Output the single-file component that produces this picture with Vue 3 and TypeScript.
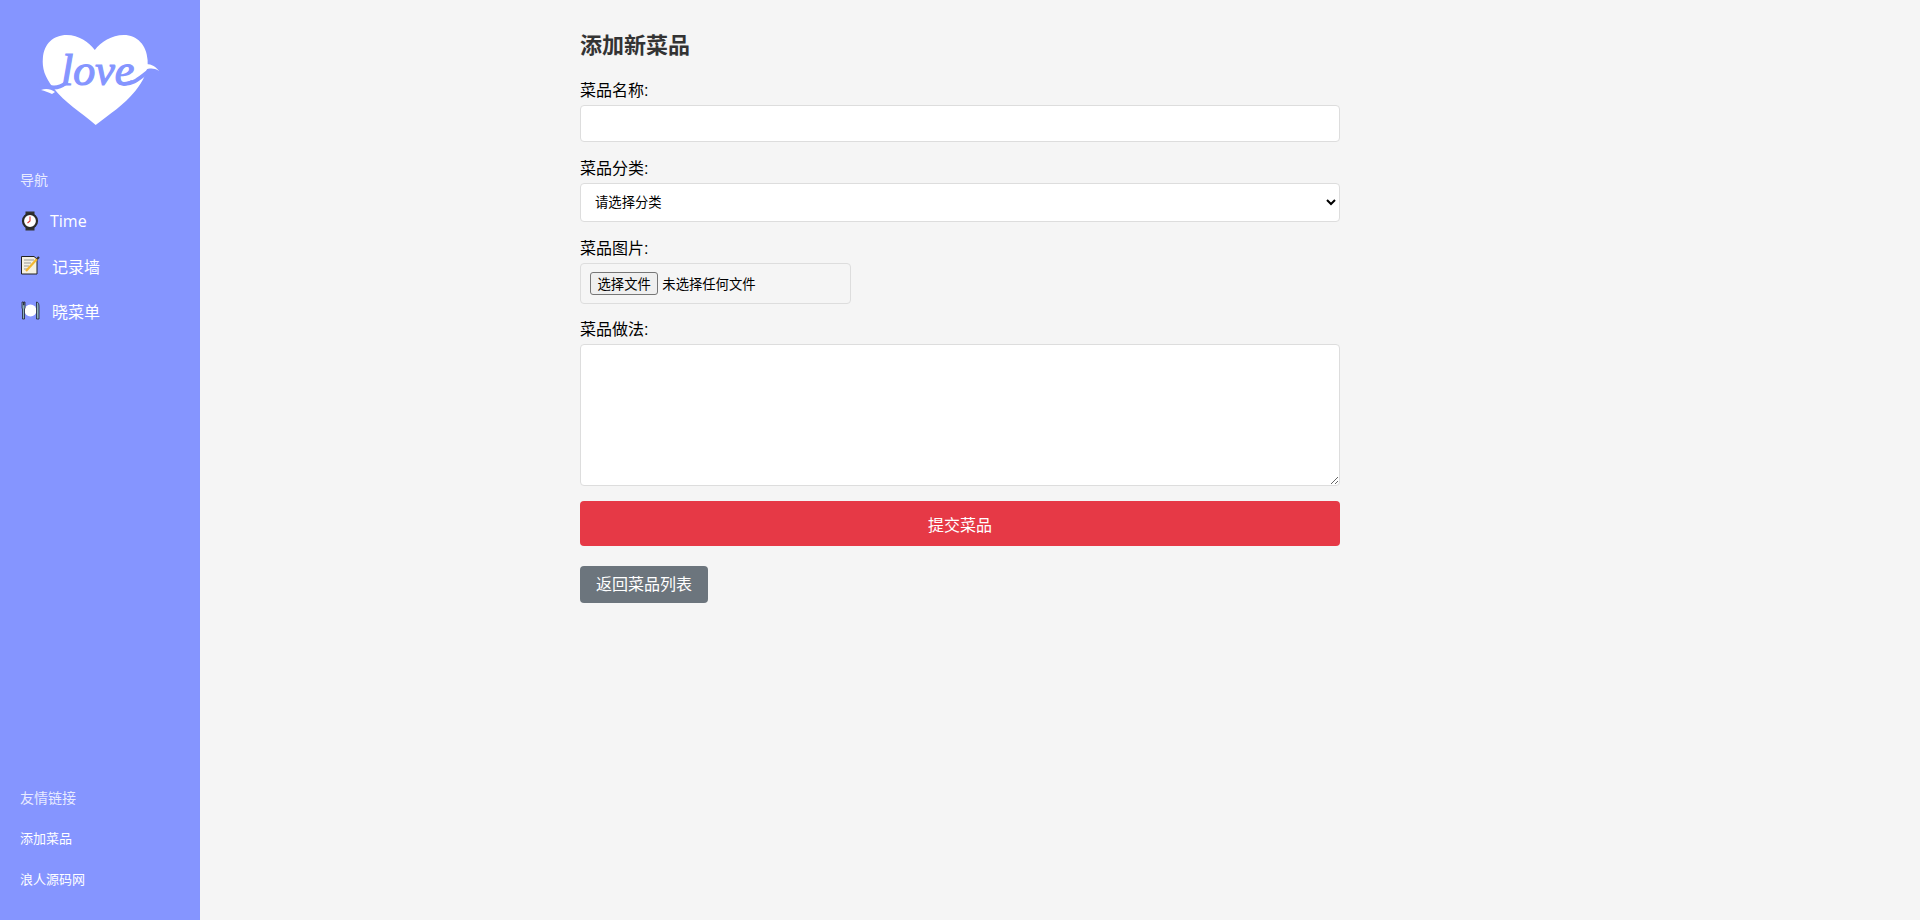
<script setup lang="ts">
import { ref } from 'vue'

const name = ref('')
const category = ref('')
const recipe = ref('')
const fileName = ref('未选择任何文件')
const fileInput = ref<HTMLInputElement | null>(null)

function pickFile(): void {
  fileInput.value?.click()
}

function onFile(e: Event): void {
  const files = (e.target as HTMLInputElement).files
  fileName.value = files && files[0] ? files[0].name : '未选择任何文件'
}
</script>

<template>
  <div class="page">
    <aside class="sidebar">
      <div class="top">
        <div class="logo">
          <svg width="122" height="92" viewBox="0 0 122 92">
            <path class="heart" transform="translate(2 0) scale(0.88 1)" d="M61 91 C44 78 26 69 13 54 C3 43 0 34 1 24 C2 10 13 1 28 1 C42 1 53 8 60 16 C67 8 79 1 93 1 C108 1 119 11 120 26 C121 37 115 47 106 57 C93 71 77 80 61 91 Z" />
            <path class="cut" d="M84 50 C95 50 100 43 112 35" />
            <path class="cut" d="M26 49 C18 55 10 55 2 49" />
            <path class="heart" d="M106 30 C112 30 116 33 119 37 C114 34 110 34 105 36 Z" />
            <path class="heart" d="M1 56 C6 54 11 55 15 58 L12 60 C8 58 5 57 1 56 Z" />
            <text class="love" x="21" y="51">love</text>
          </svg>
        </div>
        <div class="heading nav-heading">导航</div>
        <nav class="nav">
          <a class="nav-item" href="#">
            <svg class="icon" width="18" height="20" viewBox="0 0 18 20">
              <rect x="4.5" y="0.5" width="9" height="5" fill="#333" />
              <rect x="4.5" y="14.5" width="9" height="5" fill="#333" />
              <circle cx="9" cy="10" r="7" fill="#fff" stroke="#2b2b2b" stroke-width="2.2" />
              <path d="M9 5.5 V10 L6.5 12" fill="none" stroke="#d33" stroke-width="1.1" />
            </svg>
            <span class="time-label">Time</span>
          </a>
          <a class="nav-item" href="#">
            <svg class="icon memo" width="19" height="19" viewBox="0 0 19 19">
              <path d="M0.5 0.5 H13 L16 3 V18 H0.5 Z" fill="#f4f1e4" stroke="#222" />
              <path d="M3 4 H13 M3 7 H10 M3 10 H8 M3 13 H6" stroke="#999" fill="none" />
              <path d="M5 15 L16 3" stroke="#f2b632" stroke-width="2.2" />
              <path d="M16 3 L18 1" stroke="#333" stroke-width="2.2" />
            </svg>
            <span class="cjk-label">记录墙</span>
          </a>
          <a class="nav-item" href="#">
            <svg class="icon" width="19" height="19" viewBox="0 0 19 19">
              <circle cx="9.5" cy="9.5" r="6" fill="#fff" />
              <path d="M1 1 H2.5 V4 H3 V1 H4 V7 L3.5 8 V18 H1.5 V8 L1 7 Z" fill="#8ab0bd" stroke="#223" stroke-width="0.8" />
              <path d="M15.5 1 C17.5 1 18 3 18 6 V18 H15.5 Z" fill="#8ab0bd" stroke="#223" stroke-width="0.8" />
            </svg>
            <span class="cjk-label">晓菜单</span>
          </a>
        </nav>
      </div>
      <div class="bottom">
        <div class="heading">友情链接</div>
        <a class="link first-link" href="#">添加菜品</a>
        <a class="link" href="#">浪人源码网</a>
      </div>
    </aside>

    <main class="main">
      <div class="container">
        <h2 class="title">添加新菜品</h2>
        <form class="form" @submit.prevent>
          <div class="group">
            <label class="label" for="dish-name">菜品名称:</label>
            <input id="dish-name" v-model="name" class="control text" type="text" />
          </div>
          <div class="group">
            <label class="label" for="dish-cat">菜品分类:</label>
            <select id="dish-cat" v-model="category" class="control select">
              <option value="">请选择分类</option>
            </select>
          </div>
          <div class="group file-group">
            <span class="label">菜品图片:</span>
            <div class="file-box">
              <button class="file-btn" type="button" @click="pickFile">选择文件</button>
              <span class="file-name">{{ fileName }}</span>
              <input ref="fileInput" class="file-hidden" type="file" @change="onFile" />
            </div>
          </div>
          <div class="group">
            <label class="label" for="dish-recipe">菜品做法:</label>
            <textarea id="dish-recipe" v-model="recipe" class="control area"></textarea>
          </div>
          <button class="submit" type="submit">提交菜品</button>
        </form>
        <a class="back" href="#">返回菜品列表</a>
      </div>
    </main>
  </div>
</template>

<style scoped>
.page {
  display: grid;
  grid-template-columns: 200px 1fr 200px;
  height: 920px;
  background: #f5f5f5;
  color: #000;
  font-family: "Liberation Sans", "Noto Sans CJK SC", sans-serif;
}
.sidebar {
  display: flex;
  flex-direction: column;
  justify-content: space-between;
  background: #8595ff;
  color: #fff;
}
.logo {
  display: flex;
  padding: 34px 0 0 40px;
  height: 91px;
}
.logo svg {
  overflow: visible;
}
.heart {
  fill: #fff;
}
.cut {
  fill: none;
  stroke: #8595ff;
  stroke-width: 4px;
  stroke-linecap: round;
}
.love {
  fill: #8595ff;
  stroke: #8595ff;
  stroke-width: 1.2px;
  font-family: "Liberation Serif", serif;
  font-style: italic;
  font-size: 44px;
}
.heading {
  font-size: 14px;
  line-height: 20px;
  color: rgba(255, 255, 255, 0.82);
  padding-left: 20px;
}
.nav-heading {
  margin-top: 45px;
}
.nav {
  display: flex;
  flex-direction: column;
  margin-top: 8px;
}
.nav-item {
  display: flex;
  align-items: center;
  height: 45px;
  padding-left: 21px;
  color: #fff;
  font-size: 16px;
  text-decoration: none;
}
.icon {
  flex: none;
}
.time-label {
  margin-left: 11px;
  font-family: "Open Sans", sans-serif;
}
.cjk-label {
  margin-left: 12px;
  font-family: "Noto Sans CJK SC", sans-serif;
}
.bottom {
  display: flex;
  flex-direction: column;
  padding-bottom: 30px;
}
.link {
  margin-top: 21px;
  padding-left: 20px;
  font-size: 13px;
  line-height: 20px;
  color: #fff;
  text-decoration: none;
}
.first-link {
  margin-top: 21px;
}
.main {
  min-width: 0;
}
.container {
  max-width: 760px;
  margin: 0 auto;
  padding-top: 33px;
}
.title {
  margin: 0 0 20px;
  font-size: 22px;
  line-height: 26px;
  font-weight: 700;
  color: #333;
}
.group {
  margin-bottom: 15px;
}
.file-group {
  margin-bottom: 14px;
}
.label {
  display: block;
  margin-bottom: 3px;
  font-size: 16px;
  line-height: 23px;
}
.control {
  display: block;
  width: 100%;
  box-sizing: border-box;
  border: 1px solid #ddd;
  border-radius: 4px;
  background: #fff;
  font-family: inherit;
  font-size: 13.33px;
}
.control:focus {
  outline: none;
}
.text {
  height: 37px;
  padding: 10px;
}
.select {
  height: 39px;
  padding: 10px;
}
.area {
  height: 142px;
  padding: 10px;
  resize: vertical;
}
.file-box {
  display: flex;
  align-items: center;
  gap: 4px;
  box-sizing: border-box;
  width: 271px;
  height: 41px;
  padding: 0 9px;
  border: 1px solid #ddd;
  border-radius: 4px;
  font-size: 13.33px;
}
.file-btn {
  box-sizing: border-box;
  height: 23px;
  padding: 0 6.5px;
  border: 1px solid #767676;
  border-radius: 3px;
  background: #efefef;
  color: #000;
  font-family: inherit;
  font-size: 13.33px;
  white-space: nowrap;
}
.file-name {
  white-space: nowrap;
}
.file-hidden {
  display: none;
}
.form {
  display: flex;
  flex-direction: column;
}
.submit {
  height: 45px;
  border: 0;
  border-radius: 4px;
  background: #e63946;
  color: #fff;
  font-family: inherit;
  font-size: 16px;
}
.back {
  display: block;
  width: fit-content;
  margin-top: 20px;
  padding: 0 16px;
  border-radius: 4px;
  background: #6c757d;
  color: #fff;
  font-size: 16px;
  line-height: 37px;
  text-decoration: none;
}
</style>

<style>
html,
body {
  margin: 0;
  padding: 0;
}
</style>
